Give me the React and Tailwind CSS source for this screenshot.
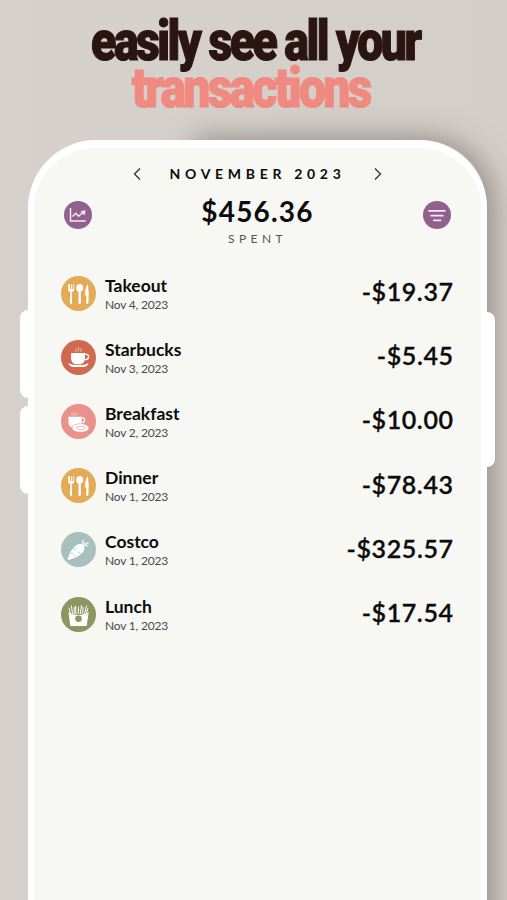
import React from 'react';

const Cutlery = () => (
  <g fill="#fff">
    <path d="M7 8.300v4.500c0 2 1 2.900 2.300 3.300l-.4 10.300c0 1 .5 1.400 1.100 1.400s1.200-.4 1.100-1.400l-.4-10.300c1.500-.4 2.500-1.300 2.500-3.300V8.300h-.8v4.600h-1.200V8.300h-1v4.600H9V8.300H8v4.600h-.2V8.300z" />
    <path d="M18.800 8c-2 0-3.600 1.700-3.600 3.900 0 1.800.9 3.200 2.500 3.700l-.3 10.800c0 1 .6 1.400 1.300 1.400s1.400-.4 1.300-1.400l-.3-10.800c1.500-.5 2.500-1.900 2.500-3.700 0-2.200-1.500-3.900-3.400-3.900z" />
    <path d="M27 8c-2.200 2-3 6-2.900 11.500l1.400.3-.4 6.600c0 1 .5 1.400 1.200 1.400s1.200-.4 1.200-1.400V20c.6-1.500.4-3.200 0-4.200z" />
  </g>
);

const Coffee = () => (
  <g fill="#fff">
    <path d="M10 13h14v4c0 4.400-2 7-4.500 7.200h-5C12 24 10 21.400 10 17z" />
    <path d="M23.500 14.300h1.800c3.300 0 3 5-.5 5.400h-1.600" fill="none" stroke="#fff" strokeWidth="1.300" />
    <path d="M7.200 23.300c2 .3 4 1.600 6.500 1.600h7.500c2.500 0 4-1.300 6.500-1.600-.7 2.200-3 3.700-5.500 3.700h-9.500c-2.500 0-4.800-1.500-5.500-3.700z" />
    <path d="M15 11.800c-1.200-1.400.8-1.800 0-3.300M17.500 11.500c-1.200-1.600 1-2.400 0-4.200M20 11.800c-1.200-1.400.8-1.800 0-3.300" fill="none" stroke="#fff" strokeWidth=".8" opacity=".8" />
  </g>
);

const CupAndPlate = () => (
  <g>
    <path d="M7.500 12.800h13.200v6c0 2.500-1.500 4.500-4 4.500h-5c-2.500 0-4.200-2-4.200-4.500z" fill="#fff" />
    <path d="M20.500 13.800h1.500c2.300 0 2 5-1 5" fill="none" stroke="#fff" strokeWidth="1.300" />
    <path d="M11 11.500V8.800M13.200 11.500c-1-1.200.6-1.500 0-3M15.800 11.500V8.800" fill="none" stroke="#fff" strokeWidth=".8" opacity=".8" />
    <ellipse cx="19.500" cy="24" rx="8.500" ry="4.300" fill="#fff" stroke="#e9928b" strokeWidth=".6" />
    <path d="M15.600 23.200c1.500-1.300 2.800.2 4.100-.7 1.600-.7 3 .1 4.200.6-.6 2-2.200 2.600-4.200 2.600s-3.400-.8-4.100-2.500z" fill="none" stroke="#e9928b" strokeWidth=".7" />
  </g>
);

const Carrot = () => (
  <g fill="#fff">
    <path d="M6.500 28.300c1-5.500 4.500-12 8.700-15 2.700-1.900 5.800-1.600 7.300.4 1.600 2.100 1.100 4.900-.9 7-3.500 3.600-9.800 6.300-15.100 7.600z" />
    <path d="M20.900 13.300c-.6-2-.2-4.300 1.100-6.200.9 1.500 1.200 2.800.9 4.100 1.600-1 3.400-1.300 5.700-.8-1.300 1-2 1.500-2.800 2 .6.600 1.300 1 2.200 1.300-2 .8-4 .8-5.900.5z" opacity=".65" />
    <path d="M12 15.800l3 2M20 22l-3-2.200M9.800 21l2.200 1M14.500 25.300l-1.500-1.700" stroke="#a8c0bd" strokeWidth=".9" />
  </g>
);

const Fries = () => (
  <g>
    <path d="M9.800 17.500L7.800 10.700M11.500 17L10.400 8.500M13.200 17V10M15 17l-.5-8.300M17.200 17l.4-7.500M19.300 17l1.200-8.900M21.700 17l.4-7M23.500 17l2-8.200M25 17.500l2-6.300" stroke="#fff" strokeWidth="1" />
    <path d="M7.400 15c2 1.400 4 2.400 5.800 2.600 2.700.4 5.800.4 8.500 0 2-.2 4-1.200 6-2.600l-2 14H9.300z" fill="#fff" />
    <circle cx="17.500" cy="21.800" r="3.300" fill="#8d9560" />
  </g>
);

const transactions = [
  { name: 'Takeout', date: 'Nov 4, 2023', amount: '-$19.37', color: 'bg-[#e3ab55]', Icon: Cutlery },
  { name: 'Starbucks', date: 'Nov 3, 2023', amount: '-$5.45', color: 'bg-[#d06a4f]', Icon: Coffee },
  { name: 'Breakfast', date: 'Nov 2, 2023', amount: '-$10.00', color: 'bg-[#e9928b]', Icon: CupAndPlate },
  { name: 'Dinner', date: 'Nov 1, 2023', amount: '-$78.43', color: 'bg-[#e3ab55]', Icon: Cutlery },
  { name: 'Costco', date: 'Nov 1, 2023', amount: '-$325.57', color: 'bg-[#a8c0bd]', Icon: Carrot },
  { name: 'Lunch', date: 'Nov 1, 2023', amount: '-$17.54', color: 'bg-[#8d9560]', Icon: Fries },
];

const Headline = () => (
  <h1 className="h-[140px] pt-[18px] flex flex-col items-center font-['Roboto',sans-serif] font-black text-[55px] leading-[47px] whitespace-nowrap tracking-[-3px]">
    <span className="block origin-center ml-1 scale-x-[0.845] text-[#2a1513] [-webkit-text-stroke:1.2px_#2a1513]">easily see all your</span>
    <span className="block origin-center mr-1.5 scale-x-[0.87] text-[#ef8a80] [-webkit-text-stroke:1.2px_#ef8a80]">transactions</span>
  </h1>
);

const MonthBar = () => (
  <div className="flex items-center justify-between w-[249px] h-5 mx-auto">
    <svg className="w-2 h-3.5" viewBox="0 0 8 14" fill="none" stroke="#333" strokeWidth="1.3"><path d="M7 1.500L1.500 7 7 12.500" /></svg>
    <span className="text-[14px] leading-[18px] pb-px font-bold tracking-[4.700px]">NOVEMBER 2023</span>
    <svg className="w-2 h-3.5" viewBox="0 0 8 14" fill="none" stroke="#333" strokeWidth="1.3"><path d="M1 1.500L6.500 7 1 12.500" /></svg>
  </div>
);

const Summary = () => (
  <div className="flex justify-between px-[30px]">
    <button className="w-7 h-7 mt-[17px] rounded-full bg-[#91608f]">
      <svg viewBox="0 0 28 28" fill="none" stroke="#f7e9f5" strokeWidth="1.5">
        <path d="M6.500 7v13h15.300M8.500 15.500l3.300-3.200 2.700 3 5-4.300" />
        <path d="M16.800 10.500l4.500-1-.8 4.500z" fill="#f7e9f5" strokeWidth=".5" />
      </svg>
    </button>
    <div className="flex flex-col items-center pt-[9px]">
      <span className="h-[38px] text-[28px] leading-9 font-bold tracking-[1.2px]">$456.36</span>
      <span className="text-[12px] leading-4 tracking-[4.400px] text-[#555]">SPENT</span>
    </div>
    <button className="w-7 h-7 mt-[17px] rounded-full bg-[#91608f]">
      <svg viewBox="0 0 28 28" fill="none" stroke="#f7e9f5" strokeWidth="1.700" strokeLinecap="round">
        <path d="M6 9.800h16M8.200 14.700h11.600M10.800 19.300h6.800" />
      </svg>
    </button>
  </div>
);

const TransactionRow = ({ name, date, amount, color, Icon }) => (
  <li className="flex items-center h-[64.2px]">
    <div className={`w-[35px] h-[35px] rounded-full shrink-0 ${color}`}>
      <svg viewBox="0 0 35 35"><Icon /></svg>
    </div>
    <div className="ml-[9px] flex-1 pt-[3px]">
      <p className="text-[17.500px] leading-5 font-bold">{name}</p>
      <p className="text-[12px] leading-[18px] tracking-[-.2px] text-[#4a4a4a]">{date}</p>
    </div>
    <span className="text-[25px] leading-8 pb-1 font-semibold tracking-[.6px] -mr-[.6px] [-webkit-text-stroke:.3px_#0c0c0c]">{amount}</span>
  </li>
);

const App = () => {
  return (
    <main className="w-[507px] h-[900px] overflow-hidden bg-linear-to-r from-[#d6d1cc] to-[#d4cec8]">
      <Headline />
      <div className="relative w-[459px] h-[760px] ml-7">
        <div className="absolute left-[165px] right-0 top-0 h-[900px] rounded-tr-[66px] shadow-[4px_0_28px_3px_#79716bb0]" />
        <div className="absolute -left-2 top-[170px] w-4 h-[88px] rounded-lg bg-white" />
        <div className="absolute -left-2 top-[266px] w-4 h-[88px] rounded-lg bg-white" />
        <div className="absolute -right-2 top-[172px] w-4 h-[155px] rounded-lg bg-white" />
        <section className="relative h-[800px] rounded-t-[68px] border-[6px] border-t-8 border-white bg-[#f7f8f4] font-['Lato',sans-serif] text-[#0c0c0c] pt-4">
          <MonthBar />
          <Summary />
          <ul className="mt-[14px] pl-[27px] pr-7">
            {transactions.map((t) => <TransactionRow key={t.name} {...t} />)}
          </ul>
        </section>
      </div>
    </main>
  );
};

export default App;
